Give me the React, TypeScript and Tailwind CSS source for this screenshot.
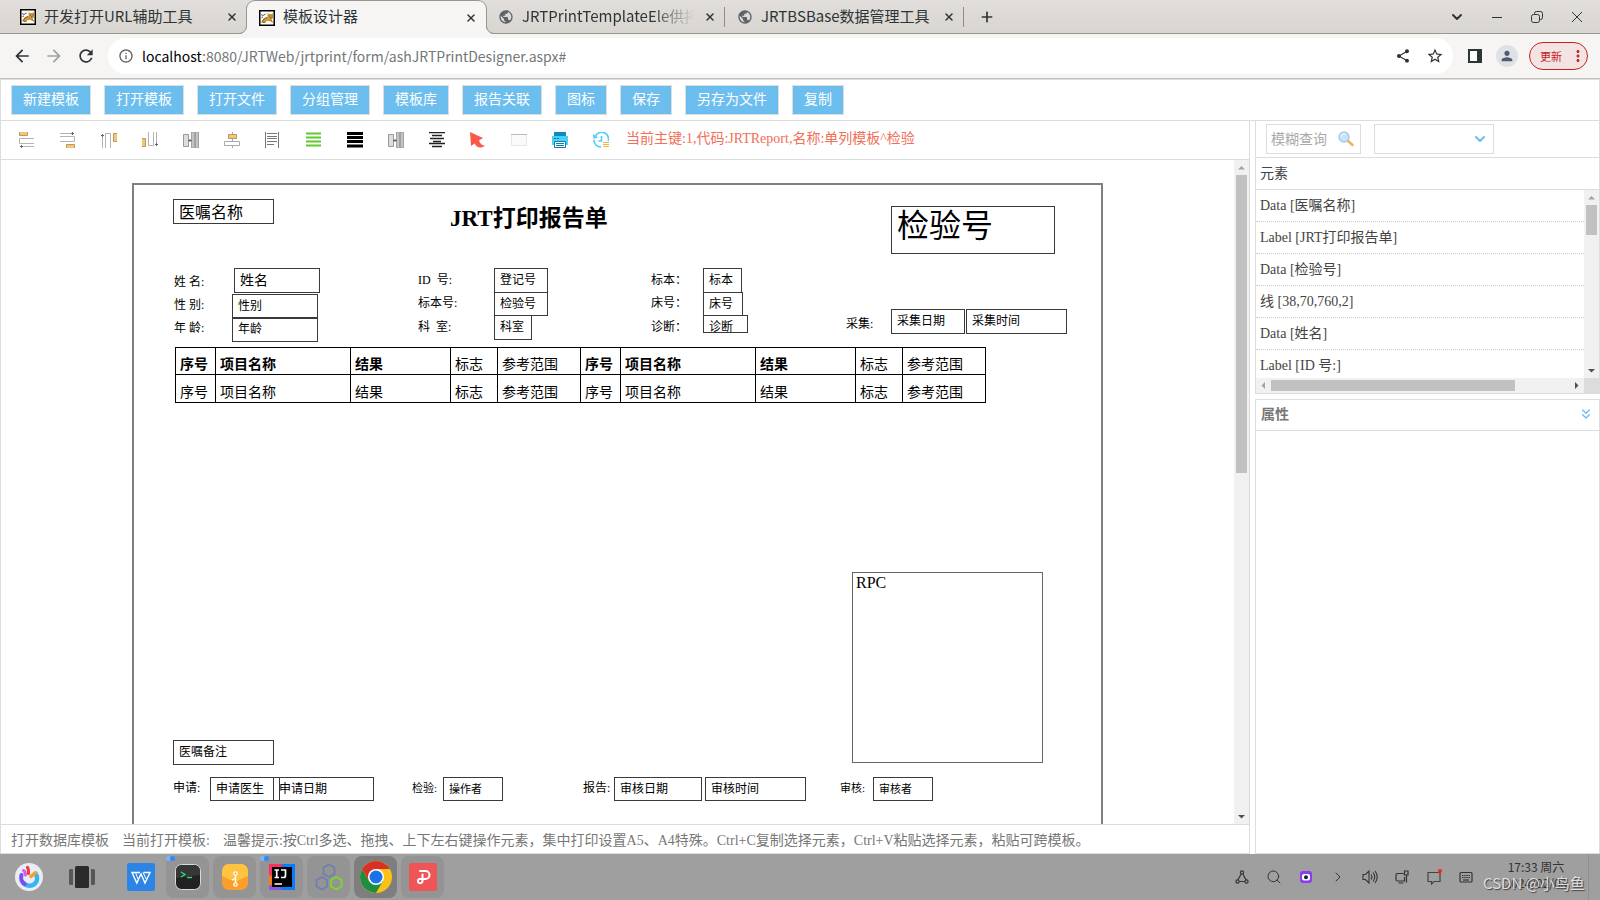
import { useState } from "react";
import {
  MdArrowBack,
  MdArrowForward,
  MdRefresh,
  MdOutlineInfo,
  MdShare,
  MdStarBorder,
  MdPerson,
  MdMoreVert,
  MdPublic,
} from "react-icons/md";
import { ChevronDown, ChevronRight, ChevronsDown, Plus, Search, X } from "lucide-react";

interface Field {
  text: string;
  x: number;
  y: number;
  w?: number;   // fields with a size are data boxes, the rest are labels
  h?: number;
  style?: keyof typeof fieldText;
}

const fieldText = {
  small:  "text-[11px] leading-[22px]",
  normal: "text-[12px] leading-[23px]",
  name:   "text-[14px] leading-[24px]",
  order:  "text-[16px] leading-[25px]",
  code:   "text-[32px] leading-[38px]",
  title:  "text-[23px] leading-[28px] font-bold",
};

const fields: Field[] = [
  { text: "医嘱名称", x: 39, y: 14, w: 101, h: 25, style: "order" },
  { text: "JRT打印报告单", x: 316, y: 20, style: "title" },
  { text: "检验号", x: 757, y: 21, w: 164, h: 48, style: "code" },
  { text: "姓 名:", x: 40, y: 86 },
  { text: "姓名", x: 100, y: 83, w: 86, h: 25, style: "name" },
  { text: "ID  号:", x: 284, y: 84 },
  { text: "登记号", x: 360, y: 83, w: 54, h: 25 },
  { text: "标本\uFF1A", x: 517, y: 84 },
  { text: "标本", x: 569, y: 83, w: 39, h: 25 },
  { text: "性 别:", x: 40, y: 109 },
  { text: "性别", x: 98, y: 109, w: 86, h: 25 },
  { text: "标本号:", x: 284, y: 107 },
  { text: "检验号", x: 360, y: 107, w: 54, h: 24 },
  { text: "床号\uFF1A", x: 517, y: 107 },
  { text: "床号", x: 569, y: 107, w: 40, h: 24 },
  { text: "年 龄:", x: 40, y: 132 },
  { text: "年龄", x: 98, y: 132, w: 86, h: 25 },
  { text: "科  室:", x: 284, y: 131 },
  { text: "科室", x: 360, y: 130, w: 38, h: 25 },
  { text: "诊断\uFF1A", x: 517, y: 131 },
  { text: "诊断", x: 569, y: 130, w: 45, h: 18 },
  { text: "采集:", x: 712, y: 128 },
  { text: "采集日期", x: 757, y: 124, w: 74, h: 25 },
  { text: "采集时间", x: 832, y: 124, w: 101, h: 25 },
  { text: "医嘱备注", x: 39, y: 555, w: 101, h: 25 },
  { text: "申请:", x: 39, y: 592 },
  { text: "申请医生", x: 76, y: 592, w: 70, h: 24 },
  { text: "申请日期", x: 139, y: 592, w: 101, h: 24 },
  { text: "检验:", x: 278, y: 592, style: "small" },
  { text: "操作者", x: 309, y: 592, w: 60, h: 24, style: "small" },
  { text: "报告:", x: 449, y: 592 },
  { text: "审核日期", x: 480, y: 592, w: 88, h: 24 },
  { text: "审核时间", x: 571, y: 592, w: 101, h: 24 },
  { text: "审核:", x: 706, y: 592, style: "small" },
  { text: "审核者", x: 739, y: 592, w: 60, h: 24, style: "small" },
];

const menu = ["新建模板", "打开模板", "打开文件", "分组管理", "模板库", "报告关联", "图标", "保存", "另存为文件", "复制"];

const elements = [
  "Data [医嘱名称]",
  "Label [JRT打印报告单]",
  "Data [检验号]",
  "线 [38,70,760,2]",
  "Data [姓名]",
  "Label [ID 号:]",
];

const columns = ["序号", "项目名称", "结果", "标志", "参考范围"];

function TomcatIcon() {
  return (
    <svg className="h-4 w-4 shrink-0" viewBox="0 0 16 16">
      <rect x="0.75" y="0.75" width="14.500" height="14.500" fill="#fff" stroke="#000" strokeWidth="1.500" />
      <path d="M2 12.500l2.500-4 4-1.500L8.500 3l2 1h2l1.500-1 .3 5-2 1.800.7 2.700-2.500-1.500-3.500.3-2.500 1.700z" fill="#cf9a3c" />
      <path d="M3 12c1-2.500 2.500-4 5-4.500M12 10l2 2.500M7 12l-3 .5" stroke="#7a5518" strokeWidth=".9" fill="none" />
      <path d="M2 4.500l2 1L6.500 4M2.500 7.500L4 7M10 6h1M12.500 6h1M11 8h1.500" stroke="#444" strokeWidth=".9" fill="none" />
    </svg>
  );
}

function Tab({ title, active, cat }: { title: string; active?: boolean; cat?: boolean }) {
  return (
    <div
      className={`relative flex w-[239px] items-center pl-3 pr-[7px] ${
        active ? "-mb-px rounded-t-lg bg-[#f6f5f4] shadow-[0_0_0_1px_#9a9692] [clip-path:inset(-1px_-9px_0_-9px)]" : ""
      }`}
    >
      {active && (
        <>
          <svg className="absolute bottom-0 -left-2 h-2 w-2" viewBox="0 0 8 8">
            <path d="M8 0v8H0A8 8 0 0 0 8 0z" fill="#f6f5f4" />
            <path d="M0 7.500A7.500 7.500 0 0 0 7.500 0" fill="none" stroke="#9a9692" />
          </svg>
          <svg className="absolute -right-2 bottom-0 h-2 w-2" viewBox="0 0 8 8">
            <path d="M0 0v8h8A8 8 0 0 1 0 0z" fill="#f6f5f4" />
            <path d="M8 7.500A7.500 7.500 0 0 1 .5 0" fill="none" stroke="#9a9692" />
          </svg>
        </>
      )}
      {cat ? <TomcatIcon /> : <MdPublic className="h-4 w-4 shrink-0 text-[#5f6368]" />}
      <span
        className={`ml-2 flex-1 overflow-hidden whitespace-nowrap pb-0.5 text-[15px] ${
          title.length > 20 ? "[mask-image:linear-gradient(to_right,#000_75%,transparent)]" : ""
        }`}
      >
        {title}
      </span>
      <button aria-label="关闭标签页" className="ml-2 p-0.5">
        <X className="h-3 w-3" strokeWidth={3} />
      </button>
    </div>
  );
}

/* Little triangle at the end of a scroll bar */
function Arrow({ dir, off }: { dir: "up" | "down" | "left" | "right"; off?: boolean }) {
  const d = {
    up:    "M4 9.500h7L7.500 6z",
    down:  "M4 6h7L7.500 9.500z",
    left:  "M9 4v7L5.500 7.500z",
    right: "M6 4v7l3.500-3.500z",
  }[dir];
  return (
    <svg className="h-[15px] w-[15px] shrink-0" viewBox="0 0 15 15">
      <path d={d} fill={off ? "#a3a3a3" : "#505050"} />
    </svg>
  );
}

const toolIcons = [
  {
    name: "左对齐",
    art: (
      <>
        <path d="M.5 0v3.500h8V0" fill="#f3c677" stroke="#b89a62" />
        <path d="M15 6.500H.5v5H15M2 14.500h13" stroke="#b4b4b4" fill="none" />
        <path d="M1 14.500h3M2.500 13v3" stroke="#666" />
      </>
    ),
  },
  {
    name: "右对齐",
    art: (
      <>
        <path d="M6.500 16v-3.500h8V16" fill="#f3c677" stroke="#b89a62" />
        <path d="M0 4.500h14.500v5H0M0 1.500h14" stroke="#b4b4b4" fill="none" />
        <path d="M11 1.500h3M12.500 0v3" stroke="#666" />
      </>
    ),
  },
  {
    name: "顶对齐",
    art: (
      <>
        <path d="M16 1.500h-3.500v8H16" fill="#f3c677" stroke="#b89a62" />
        <path d="M4.500 16V1.500h5V16M1.500 2v14" stroke="#b4b4b4" fill="none" />
        <path d="M0 3.500h3M1.500 2v3" stroke="#666" />
      </>
    ),
  },
  {
    name: "底对齐",
    art: (
      <>
        <path d="M0 6.500h3.500v8H0" fill="#f3c677" stroke="#b89a62" />
        <path d="M6.500 0v13.500h5V0M14.500 0v14" stroke="#b4b4b4" fill="none" />
        <path d="M13 12.500h3M14.500 11v3" stroke="#666" />
      </>
    ),
  },
  { name: "等宽", art: "pair" },
  {
    name: "居中",
    art: (
      <>
        <path d="M8.500 0v16" stroke="#aaa" />
        <path d="M4.500 2.500h8v4h-8z" fill="#f3c677" stroke="#b89a62" />
        <path d="M.5 9.500h15v4H.5z" fill="#fff" stroke="#aaa" />
      </>
    ),
  },
  {
    name: "两端对齐",
    art: (
      <>
        <path d="M.5 0v16M13.500 0v16" stroke="#777" />
        <path d="M2 1.500h10M2 4.500h10M2 6.500h10M2 9.500h10M2 12.500h7" stroke="#777" />
      </>
    ),
  },
  { name: "行距", art: <path d="M0 1.500h15M0 5.500h15M0 9.500h15M0 13.500h15" stroke="#5fc92e" strokeWidth="2" /> },
  { name: "线条", art: <path d="M0 1.500h16M0 5.500h16M0 9.500h16M0 14h16" stroke="#000" strokeWidth="3" /> },
  { name: "等高", art: "pair" },
  { name: "文字居中", art: <path d="M0 .5h16M3 3.500h10M1 6.500h14M4 9.500h8M0 11.500h16M3 14.500h10" stroke="#222" strokeWidth="1.500" /> },
  { name: "选择", art: <path d="M0 0l13 6-4 2.500c1 3 3 5 6 5-4 3.500-8 2.500-10.500-2L1 14z" fill="#fa5a4b" /> },
  {
    name: "边框",
    art: (
      <>
        <path d="M.5 2.500h15v11H.5z" fill="#fafafa" stroke="#e6e6e6" />
        <path d="M0 2.500h16" stroke="#bbb" />
      </>
    ),
  },
  {
    name: "打印",
    art: (
      <>
        <path d="M2 0h12v4H2z" fill="#0e8bb8" />
        <path d="M0 4h16v9H0z" fill="#4bd0fb" />
        <path d="M2 6h2v1H2zM5 6h2v1H5z" fill="#0e6f96" />
        <path d="M2.500 9.500h11v6h-11z" fill="#fff" stroke="#0e7fa8" />
        <path d="M4 11.500h8M4 13.500h8" stroke="#0e7fa8" />
      </>
    ),
  },
  {
    name: "历史",
    art: (
      <>
        <path d="M2 5a6.800 6.800 0 0 1 13.200 4M1 8A6.800 6.800 0 0 0 8 15M8.500 4v5h-3" stroke="#4bd0fb" strokeWidth="1.600" fill="none" />
        <path d="M0 2l.5 5L5 5.500z" fill="#4bd0fb" />
        <path d="M10 10.500h6M10 12.500h6M10 14.500h6" stroke="#f5b23d" />
      </>
    ),
  },
];

function PairArt() {
  return (
    <>
      <path d="M.5 2.500h5v12h-5z" fill="#ddd" stroke="#999" />
      <path d="M8.500 0h3v16h-3zM12.500 0h3v16h-3z" fill="#c4c4c4" stroke="#a2a2a2" />
      <path d="M5 8.500h4M7 7v3" stroke="#666" />
    </>
  );
}

function Designer() {
  return (
    <div className="flex min-h-0 flex-1">
      <div className="min-w-0 flex-1 overflow-hidden">
        <div className="relative ml-[131px] mt-[23px] h-[1375px] w-[971px] border-2 border-[#808080] text-black">
          {fields.map((f, i) => (
            <div
              key={i}
              className={`absolute overflow-hidden whitespace-pre ${fieldText[f.style ?? "normal"]} ${
                f.w ? "border border-[#3a3a3a] pl-[5px]" : ""
              }`}
              style={{ left: f.x, top: f.y, width: f.w, height: f.h }}
            >
              {f.text}
            </div>
          ))}

          <table className="absolute left-[41px] top-[162px] table-fixed border-collapse text-[14px] leading-[18px]">
            <colgroup>
              {[0, 1].map((n) => [
                <col key={`${n}a`} className="w-10" />,
                <col key={`${n}b`} className="w-[135px]" />,
                <col key={`${n}c`} className="w-[100px]" />,
                <col key={`${n}d`} className="w-[47px]" />,
                <col key={`${n}e`} className="w-[83px]" />,
              ])}
            </colgroup>
            <tbody>
              <tr className="h-[27px]">
                {[...columns, ...columns].map((c, i) => (
                  <th
                    key={i}
                    className={`border border-black pb-0 pl-1 pt-2 text-left ${i % 5 < 3 ? "font-bold" : "font-normal"}`}
                  >
                    {c}
                  </th>
                ))}
              </tr>
              <tr className="h-[28px]">
                {[...columns, ...columns].map((c, i) => (
                  <td key={i} className="border border-black pb-0 pl-1 pt-2">{c}</td>
                ))}
              </tr>
            </tbody>
          </table>

          <div className="absolute left-[718px] top-[387px] h-[191px] w-[191px] border border-[#666] pl-[3px] text-[16px] leading-[20px]">
            RPC
          </div>
        </div>
      </div>

      <div className="flex w-[15px] flex-col items-center bg-[#f1f1f1]">
        <Arrow dir="up" off />
        <div className="w-[11px] flex-1">
          <div className="h-[47%] bg-[#c1c1c1]" />
        </div>
        <Arrow dir="down" />
      </div>
    </div>
  );
}

function SidePanel() {
  const [query, setQuery] = useState("");

  return (
    <aside className="flex w-[345px] flex-col">
      <section className="border-x border-b border-[#ddd]">
        <div className="flex h-[37px] items-center gap-[13px] border-b border-[#ddd] pl-[10px]">
          <label className="flex h-[30px] w-[95px] items-center border border-[#ddd] px-1">
            <input
              value={query}
              onChange={(e) => setQuery(e.target.value)}
              placeholder="模糊查询"
              aria-label="模糊查询"
              className="w-full min-w-0 flex-1 text-[14px] outline-none placeholder:text-[#aaa]"
            />
            <svg className="mr-0.5 h-4 w-4 shrink-0" viewBox="0 0 16 16">
              <path d="M10 10l4.500 4" stroke="#eeb35e" strokeWidth="2.600" strokeLinecap="round" />
              <circle cx="6" cy="6" r="5" fill="#c9e4fb" stroke="#a3c9ee" strokeWidth="1.400" />
              <path d="M3 5.500A3 3 0 0 1 7 3" stroke="#fff" fill="none" />
            </svg>
          </label>
          <div className="relative">
            <select aria-label="元素类型" className="h-[30px] w-[120px] appearance-none border border-[#ddd] bg-white text-[14px]">
              <option></option>
            </select>
            <ChevronDown className="pointer-events-none absolute right-1.5 top-[7px] h-4 w-4 text-[#6cbdee]" strokeWidth={3} />
          </div>
        </div>
        <h2 className="h-8 border-b border-[#ddd] pl-1 text-[14px] leading-[32px]">元素</h2>
        <div className="flex">
          <div className="min-w-0 flex-1">
            <ul className="h-[188px] overflow-hidden text-[14px]">
              {elements.map((el) => (
                <li key={el} className="h-8 border-b border-dotted border-[#ccc] pl-1 leading-[32px]">{el}</li>
              ))}
            </ul>
            <div className="flex h-[15px] items-center bg-[#f1f1f1]">
              <Arrow dir="left" off />
              <div className="h-[11px] flex-1">
                <div className="h-full w-[82%] bg-[#c1c1c1]" />
              </div>
              <Arrow dir="right" />
            </div>
          </div>
          <div className="flex w-[15px] flex-col bg-[#f1f1f1]">
            <Arrow dir="up" off />
            <div className="mx-auto h-[30px] w-[11px] bg-[#c1c1c1]" />
            <div className="flex-1" />
            <Arrow dir="down" />
            <div className="h-[15px] bg-[#dcdcdc]" />
          </div>
        </div>
      </section>

      <section className="mt-[5px] flex flex-1 flex-col border border-[#ddd]">
        <h2 className="flex h-[31px] items-center justify-between border-b border-[#ddd] pb-0.5 pl-[5px] pr-[5px] text-[14px] font-bold text-[#777]">
          属性
          <button aria-label="展开属性">
            <ChevronsDown className="h-4 w-4 text-[#6cbdee]" />
          </button>
        </h2>
      </section>
    </aside>
  );
}

function Taskbar() {
  const tile = "relative flex h-[42px] w-[43px] items-center justify-center rounded-lg bg-[#949494]";
  return (
    <footer className="flex h-[46px] items-center bg-[#9f9f9f] font-['Noto_Sans_CJK_SC',sans-serif] text-[#333]">
      <button aria-label="启动器" className="ml-[15px]">
        <svg className="h-7 w-7" viewBox="0 0 28 28">
          <circle cx="14" cy="14" r="14" fill="#e9ecf3" />
          <path d="M20.500 10.500c2.500 4 2 8-1 10.500s-8 2.500-10.500-.5" fill="none" stroke="#35b4f5" strokeWidth="4.500" strokeLinecap="round" />
          <path d="M20.500 10c-2 1-3 2-4.500 3.500" fill="none" stroke="#f9a02b" strokeWidth="3.500" strokeLinecap="round" />
          <path d="M6.500 12c-1 4 0 7 3 9" fill="none" stroke="#7a4df0" strokeWidth="4" strokeLinecap="round" />
          <path d="M8.500 7.500c1.500 1 2 2.500 2 4.500" stroke="#d25cf0" strokeWidth="3" fill="none" strokeLinecap="round" />
          <path d="M12.500 4.500c1.200 1.500 1.300 3.500 1 6" stroke="#ef3b3b" strokeWidth="3.200" fill="none" strokeLinecap="round" />
        </svg>
      </button>
      <button aria-label="多任务视图" className="ml-[26px]">
        <svg className="h-[22px] w-[26px]" viewBox="0 0 26 22">
          <rect x="6" width="14" height="22" rx="1.500" fill="#2b2b2b" />
          <path d="M0 4.500q0-1.500 1.500-1.500H4v16H1.500Q0 19 0 17.500zM26 4.500Q26 3 24.500 3H22v16h2.500q1.500 0 1.500-1.500z" fill="#575757" />
        </svg>
      </button>
      <button aria-label="WPS" className="ml-8 mr-[11px]">
        <svg className="h-7 w-7" viewBox="0 0 28 28">
          <rect width="28" height="28" rx="2.500" fill="#2b84e6" />
          <path d="M13 9.500H5L9.800 20 14 11l4 9 5-10.500h-6.500" fill="none" stroke="#fff" strokeWidth="1.400" />
          <path d="M8.500 9.500L11 16M16 9.500l3.500 7" stroke="#fff" fill="none" />
        </svg>
      </button>
      <div className="flex gap-1">
        <button aria-label="终端" className={tile}>
          <svg className="absolute left-0 top-0 h-[5px] w-[9px]" viewBox="0 0 9 5">
            <circle cx="2.500" cy="2.500" r="2.500" fill="#78b4ff" /><circle cx="6.500" cy="2.500" r="2.500" fill="#2e8bff" />
          </svg>
          <svg className="h-[26px] w-[26px]" viewBox="0 0 26 26">
            <rect x=".5" y=".5" width="25" height="25" rx="6" fill="#222" stroke="#d5dde2" />
            <path d="M1 14V7a6 6 0 0 1 6-6h12a6 6 0 0 1 6 6v4z" fill="#444" opacity=".6" />
            <path d="M6 8l4 2.500L6 13" fill="none" stroke="#2fd67c" strokeWidth="1.400" />
            <path d="M12 13.500h5" stroke="#2fd67c" strokeWidth="1.400" />
          </svg>
        </button>
        <button aria-label="归档管理器" className={tile}>
          <svg className="h-[26px] w-[26px]" viewBox="0 0 26 26">
            <rect width="26" height="26" rx="7" fill="#fb9e2e" />
            <path d="M0 12V7a7 7 0 0 1 7-7h12a7 7 0 0 1 7 7v5l-13 6z" fill="#fec340" />
            <path d="M13.500 10v10M10 16l3-1.500" stroke="#fff" strokeWidth="1.300" />
            <circle cx="13.500" cy="9.500" r="1.700" fill="#fb9e2e" stroke="#fff" strokeWidth="1.300" />
            <circle cx="13.500" cy="20.500" r="1.700" fill="#fb9e2e" stroke="#fff" strokeWidth="1.300" />
          </svg>
        </button>
        <button aria-label="IntelliJ IDEA" className={tile}>
          <svg className="absolute left-0 top-0 h-[5px] w-[9px]" viewBox="0 0 9 5">
            <circle cx="2.500" cy="2.500" r="2.500" fill="#78b4ff" /><circle cx="6.500" cy="2.500" r="2.500" fill="#2e8bff" />
          </svg>
          <svg className="h-[26px] w-[26px]" viewBox="0 0 26 26">
            <path d="M0 0h26v26H0z" fill="#087cfa" />
            <path d="M0 0h14L4 13H0z" fill="#fe315d" />
            <path d="M0 11l5 2-1 8-4 3z" fill="#f97a12" />
            <path d="M0 22l6-3 8 7H0z" fill="#8a5ad8" />
            <path d="M3 3h20v20H3z" fill="#000" />
            <path d="M5.500 6h4.500M7.700 6v7.500M5.500 13.500h4.500M12 6h4.500v5.500q0 2-2 2H12M5.500 20H13" fill="none" stroke="#fff" strokeWidth="1.700" />
          </svg>
        </button>
        <button aria-label="数据库工具" className={tile}>
          <svg className="h-7 w-7" viewBox="0 0 28 28" fill="none" strokeWidth="1.800">
            <path d="M14 1.500l5.500 3v6.500L14 14l-5.500-3V4.500z" stroke="#6d80ae" />
            <path d="M7 14l5 3v6.500l-5 3-5.500-3V17z" stroke="#6d80ae" />
            <path d="M21.500 14l5 3v6.500l-5 3-5.500-3V17z" stroke="#7bd92b" />
          </svg>
        </button>
        <button aria-label="Chrome" className="flex h-[42px] w-[43px] items-center justify-center rounded-lg bg-[#7e7e7e]">
          <svg className="h-8 w-8" viewBox="0 0 32 32">
            <circle cx="16" cy="16" r="16" fill="#fbc116" />
            <path d="M2.150 8A16 16 0 0 0 16 32l7-12-7-4-7 4z" fill="#1e8e3e" />
            <path d="M16 8h13.850A16 16 0 0 0 2.150 8l7 12z" fill="#d93025" />
            <circle cx="16" cy="16" r="8" fill="#fff" />
            <circle cx="16" cy="16" r="6.500" fill="#1a73e8" />
          </svg>
        </button>
        <button aria-label="PDF 阅读器" className={tile}>
          <svg className="h-7 w-7" viewBox="0 0 28 28">
            <rect width="28" height="28" rx="2.500" fill="#ee5556" />
            <path d="M11 8h5.500a4 4 0 0 1 0 8H10a2.300 2.300 0 1 0 3.500 2V11.500" fill="none" stroke="#fff" strokeWidth="2" strokeLinecap="round" />
          </svg>
        </button>
      </div>

      <div className="ml-auto flex items-center gap-4">
        <button aria-label="网络拓扑">
          <svg className="h-4 w-4" viewBox="0 0 16 16" fill="none" stroke="#333" strokeWidth="1.200">
            <circle cx="8" cy="3.500" r="1.600" /><circle cx="3.500" cy="12.500" r="1.600" /><circle cx="12.500" cy="12.500" r="1.600" />
            <path d="M7 5.200L4 10.800M9 5.200l3 5.600M5.300 12.500h5.400" />
          </svg>
        </button>
        <button aria-label="搜索"><Search className="h-4 w-4" strokeWidth={1.5} /></button>
        <button aria-label="截图">
          <svg className="h-4 w-4" viewBox="0 0 16 16">
            <rect x="2" y="2" width="12" height="12" rx="3" fill="#8a3df0" />
            <rect x="4" y="5" width="8" height="6.500" rx="2" fill="#fff" />
            <circle cx="8" cy="8.300" r="2" fill="#124" />
          </svg>
        </button>
        <button aria-label="展开托盘"><ChevronRight className="h-4 w-4" strokeWidth={1.5} /></button>
        <button aria-label="音量">
          <svg className="h-4 w-4" viewBox="0 0 16 16" fill="none" stroke="#333" strokeWidth="1.100">
            <path d="M1 5.500h2.500L7 2v12l-3.500-3.500H1zM9 5.500q2 2.500 0 5M11 3.500q3.500 4.500 0 9M13 2q4.500 6 0 12" />
          </svg>
        </button>
        <button aria-label="网络">
          <svg className="h-4 w-4" viewBox="0 0 16 16" fill="none" stroke="#333" strokeWidth="1.200">
            <path d="M9.500 4.500H3.500q-1.500 0-1.500 1.500v4.500q0 1.500 1.500 1.500h7V8M4.500 14h5M10.500 2h3.500v4h-3.500zM12.500 6v7.500" />
          </svg>
        </button>
        <button aria-label="通知" className="relative">
          <svg className="h-4 w-4" viewBox="0 0 16 16" fill="none" stroke="#444" strokeWidth="1.200">
            <path d="M2 3.500h12v9H8L5.500 15v-2.500H2z" />
          </svg>
          <span className="absolute right-0 top-0 h-1 w-1 rounded-full bg-[#ff2a00]" />
        </button>
        <button aria-label="键盘">
          <svg className="h-4 w-4" viewBox="0 0 16 16" fill="none" stroke="#333" strokeWidth="1.200">
            <rect x="2" y="3.500" width="12" height="9.500" rx="1" />
            <path d="M4 6.500h8M4 8.500h8" strokeDasharray="1.500 .7" /><path d="M5 11h6" />
          </svg>
        </button>
      </div>
      <div className="relative ml-2 flex w-[107px] flex-col items-center self-stretch border-r border-[#919191] pt-[5px] pl-0.5 text-[12px] leading-[16px]">
        <span>17:33 周六</span>
        <span>2024/02/03</span>
        <span className="absolute left-px top-[18px] whitespace-nowrap text-[15px] leading-[22px] text-[#dedede] [text-shadow:1px_1px_1px_#444]">
          CSDN @小鸟鱼
        </span>
      </div>
      <div className="w-[11px]" />
    </footer>
  );
}

export default function App() {
  return (
    <div className="flex h-screen min-w-[1200px] flex-col overflow-hidden bg-white font-['Liberation_Serif','Noto_Sans_CJK_SC',serif] text-[#444]">
      <header className="font-['Noto_Sans_CJK_SC',sans-serif] text-[#2e3436]">
        <div className="flex h-[34px] border-b border-[#9a9692] bg-linear-to-b from-[#e1dedb] to-[#d9d5d0] pl-2 pt-px">
          <Tab title="开发打开URL辅助工具" cat />
          <Tab title="模板设计器" active cat />
          <Tab title="JRTPrintTemplateEle供拷" />
          <div className="-ml-px my-1.5 w-px bg-[#8f8b87]" />
          <Tab title="JRTBSBase数据管理工具" />
          <div className="-ml-px my-1.5 w-px bg-[#8f8b87]" />
          <button aria-label="新标签页" className="ml-[15px]"><Plus className="h-4 w-4" strokeWidth={2.5} /></button>
          <div className="ml-auto flex items-center gap-6 pr-[15px]">
            <button aria-label="搜索标签页"><ChevronDown className="h-4 w-4" strokeWidth={3} /></button>
            <button aria-label="最小化">
              <svg className="h-4 w-4" viewBox="0 0 16 16"><path d="M3 8.500h10" stroke="#2e3436" /></svg>
            </button>
            <button aria-label="还原">
              <svg className="h-4 w-4" viewBox="0 0 16 16" fill="none" stroke="#2e3436">
                <rect x="2.500" y="5.500" width="8" height="8" rx="2" />
                <path d="M5.500 5.500v-1q0-2 2-2h4q2 0 2 2v4q0 2-2 2h-1" />
              </svg>
            </button>
            <button aria-label="关闭">
              <svg className="h-4 w-4" viewBox="0 0 16 16"><path d="M3 3l10 10M13 3L3 13" stroke="#2e3436" /></svg>
            </button>
          </div>
        </div>
        <div className="flex h-[45px] items-center border-b border-[#c4c0bb] bg-[#f6f5f4] pl-3 pr-3">
          <button aria-label="后退"><MdArrowBack className="h-5 w-5" /></button>
          <button aria-label="前进" className="ml-3 text-[#a0a2a3]"><MdArrowForward className="h-5 w-5" /></button>
          <button aria-label="刷新" className="ml-3"><MdRefresh className="h-5 w-5" /></button>
          <div className="ml-3 flex h-9 flex-1 items-center rounded-full bg-white pl-[10px] pr-[9px]">
            <MdOutlineInfo className="h-4 w-4 text-[#5f6368]" />
            <span className="ml-2 flex-1 text-[14px] text-[#72777a]">
              <span className="text-black">localhost</span>:8080/JRTWeb/jrtprint/form/ashJRTPrintDesigner.aspx#
            </span>
            <button aria-label="分享"><MdShare className="h-4 w-4" /></button>
            <button aria-label="收藏" className="ml-[15px]"><MdStarBorder className="h-[18px] w-[18px]" /></button>
          </div>
          <button aria-label="侧边栏" className="ml-[15px]">
            <svg className="h-[14px] w-[14px]" viewBox="0 0 14 14">
              <path d="M1 1h12v12H1z" fill="#fff" stroke="#2e3436" strokeWidth="2" />
              <path d="M9 1h5v12H9z" fill="#2e3436" />
            </svg>
          </button>
          <button aria-label="用户" className="ml-[14px] rounded-full bg-[#dfe1e6] p-[3px] text-[#505b70]">
            <MdPerson className="h-4 w-4" />
          </button>
          <button className="ml-[11px] flex h-7 w-[59px] items-center justify-between rounded-full border border-[#c5221f] bg-[#f3e4e3] pl-[10px] text-[11px] text-[#c5221f]">
            更新
            <MdMoreVert className="h-[18px] w-[18px]" />
          </button>
        </div>
      </header>

      <main className="flex min-h-0 flex-1 flex-col border-t border-[#ddd]">
        <nav className="flex h-[41px] shrink-0 items-center gap-[13px] border-x border-b border-[#ddd] pl-[10px]">
          {menu.map((m) => (
            <button key={m} className="h-[30px] border border-[#ddd] bg-[#6cbeef] px-[11px] text-[14px] leading-[28px] text-white">
              {m}
            </button>
          ))}
        </nav>

        <div className="flex min-h-0 flex-1 gap-[5px]">
          <div className="flex min-w-0 flex-1 flex-col border-x border-b border-[#ddd]">
            <div className="flex h-[39px] shrink-0 items-center gap-[25px] border-b border-[#ddd] pl-[18px]">
              {toolIcons.map((t) => (
                <button key={t.name} aria-label={t.name}>
                  <svg className="h-4 w-4" viewBox="0 0 16 16">{t.art === "pair" ? <PairArt /> : t.art}</svg>
                </button>
              ))}
              <span className="-ml-2 pb-1 text-[14px] text-[#f16e57]">
                当前主键:1,代码:JRTReport,名称:单列模板^检验
              </span>
            </div>
            <Designer />
            <div className="flex h-[29px] shrink-0 items-center gap-[13px] border-t border-[#ddd] pl-[10px] pt-0.5 text-[14px] text-[#777]">
              <a href="#">打开数据库模板</a>
              <span>当前打开模板:</span>
              <span>温馨提示:按Ctrl多选、拖拽、上下左右键操作元素，集中打印设置A5、A4特殊。Ctrl+C复制选择元素，Ctrl+V粘贴选择元素，粘贴可跨模板。</span>
            </div>
          </div>
          <SidePanel />
        </div>
      </main>

      <Taskbar />
    </div>
  );
}
